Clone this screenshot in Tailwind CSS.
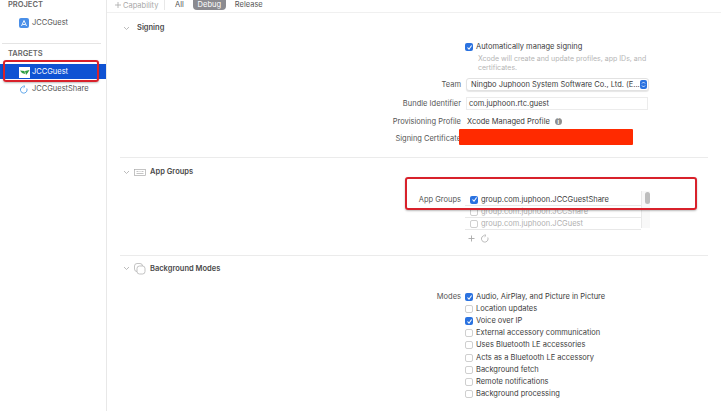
<!doctype html>
<html><head><meta charset="utf-8"><script src="https://cdn.jsdelivr.net/npm/@tailwindcss/browser@4"></script></head>
<body class="m-0">
<div class="relative w-[721px] h-[411px] overflow-hidden bg-white flex font-['Inter',sans-serif] text-[7.5px] leading-[12px] text-[#3c3c3c]">
  <aside class="w-[107px] h-full shrink-0 border-r border-[#e8e8e8] flex flex-col">
    <div class="h-[9px] pl-[8px] font-semibold text-[#666] leading-[9px]">PROJECT</div>
    <div class="mt-[8px] h-[12px] pl-[19px] flex items-center gap-[3px] text-[#555]">
      <svg width="10" height="10" viewBox="0 0 10 10"><rect width="10" height="10" rx="2" fill="#4a8fe8"/><path d="M2.5 8 5 2.5 7.5 8M3.5 6.5h3" stroke="#fff" fill="none" stroke-width="0.9"/></svg>
      <span>JCCGuest</span>
    </div>
    <div class="mt-[14px] ml-[2px] w-[99px] border-t border-[#e4e4e4]"></div>
    <div class="mt-[5px] h-[9px] pl-[8px] font-semibold text-[#666] leading-[9px]">TARGETS</div>
    <div class="mt-[6px] h-[15px] pt-[1px] bg-[#0f52d3] pl-[19px] flex items-center gap-[2px] text-white">
      <span class="w-[11px] h-[11px] bg-white flex items-center justify-center"><svg width="10" height="7" viewBox="0 0 10 7"><path d="M0 1.5 4.5 2 5 5 2 4ZM5 2 9.500 1 8 3.500 6 6Z" fill="#2f9e44"/></svg></span>
      <span>JCCGuest</span>
    </div>
    <div class="mt-[2px] h-[16px] pl-[20px] flex items-center gap-[4px] text-[#555]">
      <svg width="8" height="9" viewBox="0 0 8 9" fill="none" stroke="#4a9be8" stroke-width="0.9"><path d="M3.500 1.500A3.300 3.300 0 1 0 6.800 3.500M3.500 0.200 5 1.500 3.500 2.800"/></svg>
      <span>JCCGuestShare</span>
    </div>
  </aside>

  <main class="flex-1 flex flex-col min-w-0">
    <div class="h-[13px] pl-[8px] border-b border-[#f0f0f0] flex items-start leading-[9px] shrink-0">
      <span class="text-[#a8a8a8] w-[50px] border-r border-[#e8e8e8] h-[10px] flex items-center gap-[2px]"><svg width="6" height="6" viewBox="0 0 6 6" stroke="#a8a8a8" stroke-width="0.800"><path d="M3 0v6M0 3h6"/></svg>Capability</span>
      <span class="ml-[10px] text-[#555]">All</span>
      <span class="ml-[9px] w-[33px] h-[10px] rounded-b-[4px] bg-[#8b8b90] text-white text-center">Debug</span>
      <span class="ml-[9px] text-[#555]">Release</span>
    </div>

    <section class="mx-[13px] h-[145px] border-b border-[#ebebeb] shrink-0 pt-[9px]">
      <div class="h-[12px] flex items-center pl-[3px]">
        <svg width="7" height="5" viewBox="0 0 7 5" fill="none" stroke="#aaa" stroke-width="0.8"><path d="M1 1l2.500 2.500L6 1"/></svg>
        <span class="ml-[7px] font-semibold text-[#4a4a4a]">Signing</span>
      </div>
      <div class="mt-[7px] pl-[345px] flex flex-col">
        <div class="h-[12px] flex items-center gap-[3px]">
          <span class="w-[8px] h-[8px] rounded-[2px] bg-[#2a72e0] flex items-center justify-center"><svg width="7" height="7" viewBox="0 0 7 7" fill="none" stroke="#fff" stroke-width="1.100"><path d="M1.500 3.500 3 5.200 5.600 1.500"/></svg></span>
          <span>Automatically manage signing</span>
        </div>
        <div class="pl-[13px] text-[7px] text-[#b5b5b5] leading-[9.500px] mt-[0.500px] w-[185px]">Xcode will create and update profiles, app IDs, and certificates.</div>
      </div>
      <div class="mt-[2px] flex flex-col">
        <div class="h-[20px] flex items-center">
          <span class="w-[341px] text-right text-[#555]">Team</span>
          <span class="ml-[5px] w-[183px] h-[13px] rounded-[3px] bg-white border border-[#e2e2e2] shadow-[0_1px_1px_#0000001a] pl-[4px] flex items-center justify-between pr-[1px] whitespace-nowrap">Ningbo Juphoon System Software Co., Ltd. (E...
            <span class="w-[8px] h-[9px] rounded-[2px] bg-[#2a72e0] flex flex-col items-center justify-center"><svg width="5" height="7" viewBox="0 0 5 7" fill="none" stroke="#fff" stroke-width="0.800"><path d="M1 2.500 2.500 1 4 2.500M1 4.500 2.500 6 4 4.500"/></svg></span>
          </span>
        </div>
        <div class="h-[18px] flex items-center">
          <span class="w-[341px] text-right text-[#555]">Bundle Identifier</span>
          <span class="ml-[5px] w-[182px] h-[13px] border border-[#ececec] pl-[2px] flex items-center">com.juphoon.rtc.guest</span>
        </div>
        <div class="h-[18px] flex items-center">
          <span class="w-[341px] text-right text-[#555]">Provisioning Profile</span>
          <span class="ml-[6px]">Xcode Managed Profile</span>
          <span class="ml-[5px] w-[7px] h-[7px] rounded-full bg-[#8f8f8f] text-white text-[6px] leading-[7px] text-center font-bold">i</span>
        </div>
        <div class="h-[16px] flex items-center">
          <span class="w-[341px] text-right text-[#555]">Signing Certificate</span>
        </div>
      </div>
    </section>

    <section class="mx-[13px] h-[98px] border-b border-[#ebebeb] shrink-0 pt-[8px]">
      <div class="h-[12px] flex items-center pl-[3px]">
        <svg width="7" height="5" viewBox="0 0 7 5" fill="none" stroke="#aaa" stroke-width="0.8"><path d="M1 1l2.500 2.500L6 1"/></svg>
        <svg class="ml-[4px]" width="12" height="7" viewBox="0 0 12 7" fill="none" stroke="#aaa" stroke-width="0.7"><rect x="0.500" y="0.500" width="11" height="6"/><path d="M2.500 2.500h2M5.500 2.500h1M7.500 2.500h2M2.500 4.500h7"/></svg>
        <span class="ml-[4px] font-semibold text-[#4a4a4a]">App Groups</span>
      </div>
      <div class="mt-[13px] flex">
        <span class="w-[341px] h-[12px] mt-[3px] text-right text-[#555]">App Groups</span>
        <div class="ml-[4px] w-[185px] flex flex-col">
          <div class="relative h-[36px] flex flex-col">
            <div class="h-[12px] mt-[3px] pl-[5px] pr-[10px] flex items-center gap-[3px] border-b border-[#e8e8e8]"><span class="w-[8px] h-[8px] rounded-[2px] bg-[#2a72e0] flex items-center justify-center"><svg width="7" height="7" viewBox="0 0 7 7" fill="none" stroke="#fff" stroke-width="1.100"><path d="M1.500 3.500 3 5.200 5.600 1.500"/></svg></span><span>group.com.juphoon.JCCGuestShare</span></div>
            <div class="h-[12px] pl-[5px] flex items-center gap-[3px] border-b border-[#e8e8e8] text-[#b0b0b0] mr-[9px]"><span class="w-[8px] h-[8px] rounded-[2px] border border-[#cfcfcf]"></span><span>group.com.juphoon.JCCShare</span></div>
            <div class="h-[12px] pl-[5px] flex items-center gap-[3px] border-b border-[#e8e8e8] text-[#b0b0b0] mr-[9px]"><span class="w-[8px] h-[8px] rounded-[2px] border border-[#cfcfcf]"></span><span>group.com.juphoon.JCGuest</span></div>
            <div class="absolute right-0 top-0 w-[9px] h-[37px] bg-[#f8f8f8] border-l border-[#e8e8e8]"><div class="mt-[1px] ml-[3px] w-[5px] h-[12px] rounded-full bg-[#bdbdbd]"></div></div>
          </div>
          <div class="mt-[5px] pl-[3px] flex items-center gap-[6px] h-[12px]">
            <svg width="7" height="7" viewBox="0 0 7 7" stroke="#a8a8a8" stroke-width="0.900"><path d="M3.500 0.500v6M0.500 3.500h6"/></svg>
            <svg width="8" height="9" viewBox="0 0 8 9" fill="none" stroke="#a8a8a8" stroke-width="0.800"><path d="M3.500 1.500A3.300 3.300 0 1 0 6.800 3.500M3.500 0.200 5 1.500 3.500 2.800"/></svg>
          </div>
        </div>
      </div>
    </section>

    <section class="mx-[13px] flex-1 pt-[6px]">
      <div class="h-[13px] flex items-center pl-[3px]">
        <svg width="7" height="5" viewBox="0 0 7 5" fill="none" stroke="#aaa" stroke-width="0.8"><path d="M1 1l2.500 2.500L6 1"/></svg>
        <svg class="ml-[4px]" width="12" height="12" viewBox="0 0 12 12" fill="none" stroke="#aaa" stroke-width="0.7"><rect x="0.500" y="0.500" width="8" height="8" rx="2.500"/><rect x="3" y="3" width="8" height="8" rx="2.500" fill="#fff"/></svg>
        <span class="ml-[4px] font-semibold text-[#4a4a4a]">Background Modes</span>
      </div>
      <div class="mt-[16px] flex">
        <span class="w-[341px] text-right text-[#555]">Modes</span>
        <ul class="ml-[4px] flex flex-col">
          <li class="h-[12.100px] flex items-center gap-[3px]"><span class="w-[8px] h-[8px] rounded-[2px] bg-[#2a72e0] flex items-center justify-center"><svg width="7" height="7" viewBox="0 0 7 7" fill="none" stroke="#fff" stroke-width="1.100"><path d="M1.500 3.500 3 5.200 5.600 1.500"/></svg></span>Audio, AirPlay, and Picture in Picture</li>
          <li class="h-[12.100px] flex items-center gap-[3px]"><span class="w-[8px] h-[8px] rounded-[2px] border border-[#cfcfcf]"></span>Location updates</li>
          <li class="h-[12.100px] flex items-center gap-[3px]"><span class="w-[8px] h-[8px] rounded-[2px] bg-[#2a72e0] flex items-center justify-center"><svg width="7" height="7" viewBox="0 0 7 7" fill="none" stroke="#fff" stroke-width="1.100"><path d="M1.500 3.500 3 5.200 5.600 1.500"/></svg></span>Voice over IP</li>
          <li class="h-[12.100px] flex items-center gap-[3px]"><span class="w-[8px] h-[8px] rounded-[2px] border border-[#cfcfcf]"></span>External accessory communication</li>
          <li class="h-[12.100px] flex items-center gap-[3px]"><span class="w-[8px] h-[8px] rounded-[2px] border border-[#cfcfcf]"></span>Uses Bluetooth LE accessories</li>
          <li class="h-[12.100px] flex items-center gap-[3px]"><span class="w-[8px] h-[8px] rounded-[2px] border border-[#cfcfcf]"></span>Acts as a Bluetooth LE accessory</li>
          <li class="h-[12.100px] flex items-center gap-[3px]"><span class="w-[8px] h-[8px] rounded-[2px] border border-[#cfcfcf]"></span>Background fetch</li>
          <li class="h-[12.100px] flex items-center gap-[3px]"><span class="w-[8px] h-[8px] rounded-[2px] border border-[#cfcfcf]"></span>Remote notifications</li>
          <li class="h-[12.100px] flex items-center gap-[3px]"><span class="w-[8px] h-[8px] rounded-[2px] border border-[#cfcfcf]"></span>Background processing</li>
        </ul>
      </div>
    </section>
  </main>

  <!-- annotations drawn over the screenshot -->
  <div class="absolute left-[3px] top-[60px] w-[96px] h-[22px] rounded-[3px] border-2 border-[#d8212b] shadow-[0_1px_2px_#0004]"></div>
  <div class="absolute left-[405px] top-[177px] w-[292px] h-[33px] rounded-[3px] border-2 border-[#d8212b] shadow-[0_1px_2px_#0004]"></div>
  <div class="absolute left-[459px] top-[129px] w-[174px] h-[16px] bg-[#ff2a00] rounded-[1px]"></div>
</div>
</body></html>
